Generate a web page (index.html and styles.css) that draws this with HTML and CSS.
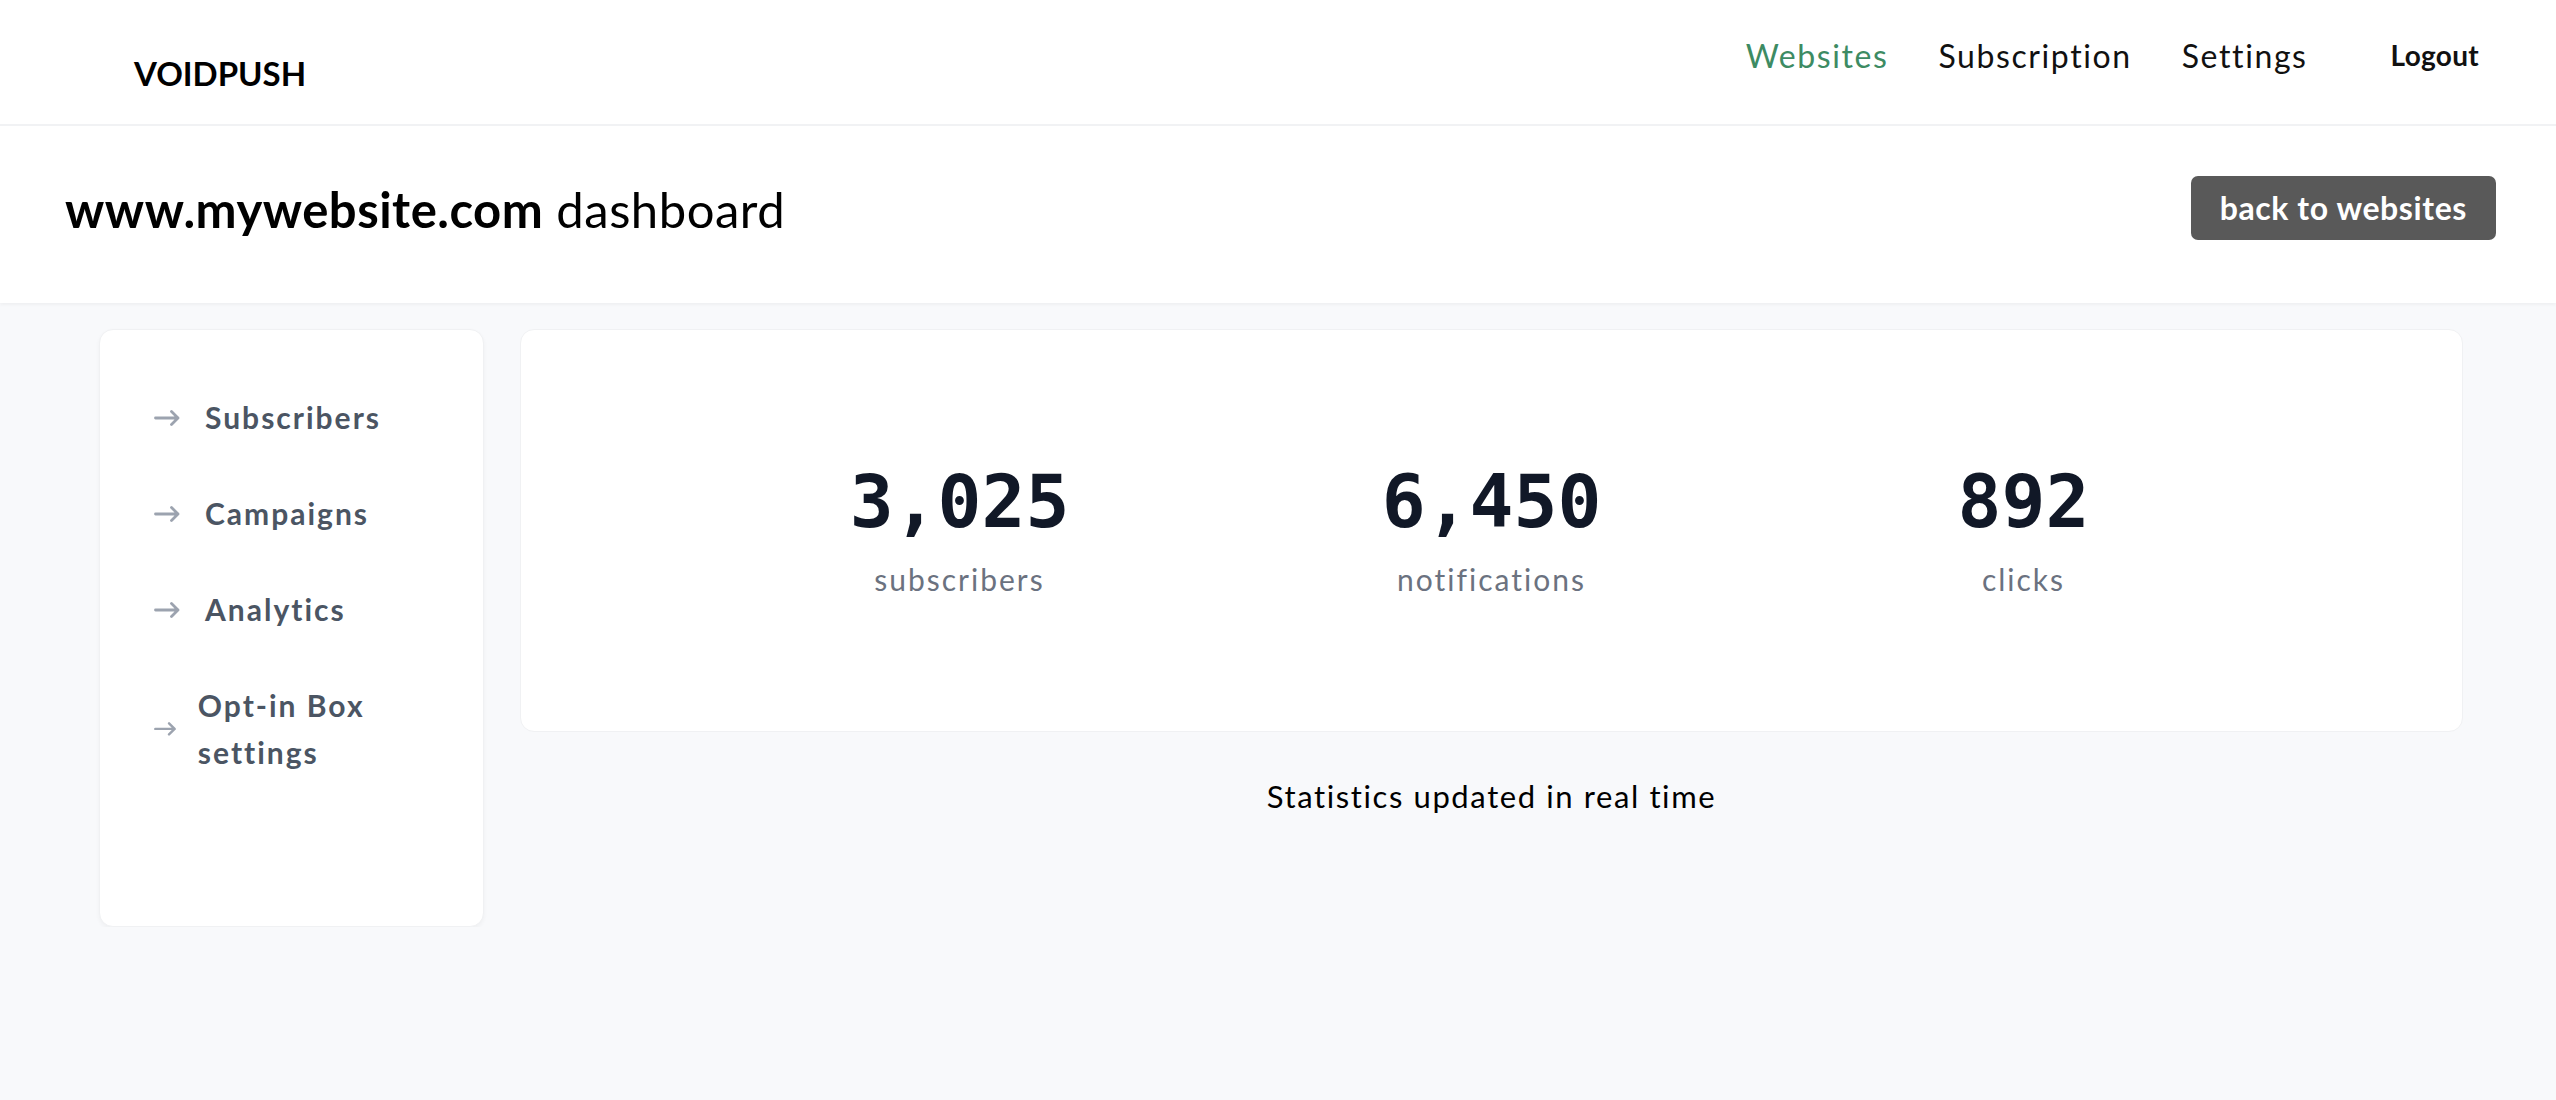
FILE: index.html
```html
<!DOCTYPE html>
<html lang="en">

<head>
    <meta charset="UTF-8">
    <meta name="viewport" content="width=device-width, initial-scale=1.0">
    <title>VOIDPUSH - dashboard</title>

    <link rel="stylesheet" href="styles.css">
</head>

<body>
    <header class="topbar">
        <div class="brand">VOIDPUSH</div>
        <nav class="menu">
            <a class="active" href="#">Websites</a>
            <a href="#">Subscription</a>
            <a href="#">Settings</a>
            <a class="logout" href="#">Logout</a>
        </nav>
    </header>

    <div class="titlebar">
        <h1><b>www.mywebsite.com</b> dashboard</h1>
        <a class="btn-back" href="#">back to websites</a>
    </div>

    <main class="layout">
        <aside class="sidebar">
            <a class="side-link" href="#">
                <span class="arrow"><svg viewBox="0 0 26 16"><path d="M1.5 8H24M17.5 1.5L24 8l-6.5 6.5" /></svg></span>
                <span>Subscribers</span>
            </a>
            <a class="side-link" href="#">
                <span class="arrow"><svg viewBox="0 0 26 16"><path d="M1.5 8H24M17.5 1.5L24 8l-6.5 6.5" /></svg></span>
                <span>Campaigns</span>
            </a>
            <a class="side-link" href="#">
                <span class="arrow"><svg viewBox="0 0 26 16"><path d="M1.5 8H24M17.5 1.5L24 8l-6.5 6.5" /></svg></span>
                <span>Analytics</span>
            </a>
            <a class="side-link" href="#">
                <span class="arrow"><svg viewBox="0 0 26 16"><path d="M1.5 8H24M17.5 1.5L24 8l-6.5 6.5" /></svg></span>
                <span>Opt-in Box settings</span>
            </a>
        </aside>

        <section class="content">
            <div class="stats-card">
                <div class="stats">
                    <div class="stat">
                        <div class="num">3,025</div>
                        <div class="label">subscribers</div>
                    </div>
                    <div class="stat">
                        <div class="num">6,450</div>
                        <div class="label">notifications</div>
                    </div>
                    <div class="stat">
                        <div class="num">892</div>
                        <div class="label">clicks</div>
                    </div>
                </div>
            </div>
            <p class="note">Statistics updated in real time</p>
        </section>
    </main>
</body>

</html>
```

FILE: styles.css
```css
body {
    margin: 0;
    background-color: #f8f9fb;
    font-family: Lato, "Noto Sans", sans-serif;
    color: #000;
}

a {
    text-decoration: none;
    color: inherit;
}

/* top navigation */
.topbar {
    height: 124px;
    background-color: white;
    border-bottom: 2px solid #f1f2f4;
    display: flex;
    justify-content: space-between;
    align-items: flex-start;
    padding: 0 77px 0 134px;
}

.brand {
    margin-top: 55px;
    font-size: 33px;
    font-weight: bold;
    line-height: 36px;
}

.menu {
    margin-top: 36px;
    display: flex;
    align-items: center;
    height: 38px;
}

.menu>a {
    font-size: 32px;
    letter-spacing: 1.6px;
    color: #111;
    margin-left: 50px;
}

.menu>a.active {
    color: #3d8b63;
    margin-left: 0;
}

.menu>a.logout {
    font-size: 28px;
    font-weight: bold;
    letter-spacing: 0.3px;
    margin-left: 83px;
}

/* page title */
.titlebar {
    height: 177px;
    box-sizing: border-box;
    padding: 0 60px 12px 65px;
    background-color: white;
    box-shadow: 0 2px 3px rgba(0, 0, 0, 0.04);
    display: flex;
    justify-content: space-between;
    align-items: center;
}

.titlebar h1 {
    margin: 0;
    font-size: 49px;
    font-weight: normal;
    letter-spacing: 0.5px;
}

.btn-back {
    height: 64px;
    margin-top: -2px;
    padding: 0 29px;
    background-color: #595959;
    border-radius: 7px;
    color: white;
    font-size: 32px;
    font-weight: bold;
    letter-spacing: 0.6px;
    display: flex;
    align-items: center;
}

/* content */
.layout {
    display: flex;
    gap: 36px;
    padding: 26px 93px 0 99px;
}

.sidebar {
    width: 385px;
    box-sizing: border-box;
    padding: 64px 30px 150px 54px;
    background-color: white;
    border: 1px solid #f0f1f3;
    border-radius: 14px;
    box-shadow: 0 2px 4px rgba(0, 0, 0, 0.04);
    display: flex;
    flex-direction: column;
    gap: 49px;
}

.side-link {
    display: flex;
    align-items: center;
    font-size: 30px;
    font-weight: bold;
    letter-spacing: 2px;
    line-height: 47px;
    color: #4b5563;
}

/* arrow shrinks a little when the label wraps */
.side-link .arrow {
    width: 51px;
    min-width: 0;
    flex-shrink: 1;
    display: flex;
    align-items: center;
}

.side-link .arrow svg {
    width: 51%;
    height: auto;
    fill: none;
    stroke: #9ca3af;
    stroke-width: 2.8;
    stroke-linecap: round;
    stroke-linejoin: round;
}

.content {
    flex: 1;
}

.stats-card {
    height: 401px;
    background-color: white;
    border: 1px solid #f0f1f3;
    border-radius: 14px;
    display: flex;
    align-items: center;
    justify-content: center;
}

.stats {
    display: grid;
    grid-template-columns: repeat(3, 532px);
    text-align: center;
}

.num {
    font-family: "DejaVu Sans Mono", monospace;
    font-weight: bold;
    font-size: 73px;
    line-height: 80px;
    color: #111827;
}

.label {
    margin-top: 17px;
    font-size: 30px;
    line-height: 40px;
    letter-spacing: 2px;
    color: #6b7280;
}

.note {
    margin: 44px 0 0;
    text-align: center;
    font-size: 31px;
    line-height: 40px;
    letter-spacing: 1.6px;
}
```
